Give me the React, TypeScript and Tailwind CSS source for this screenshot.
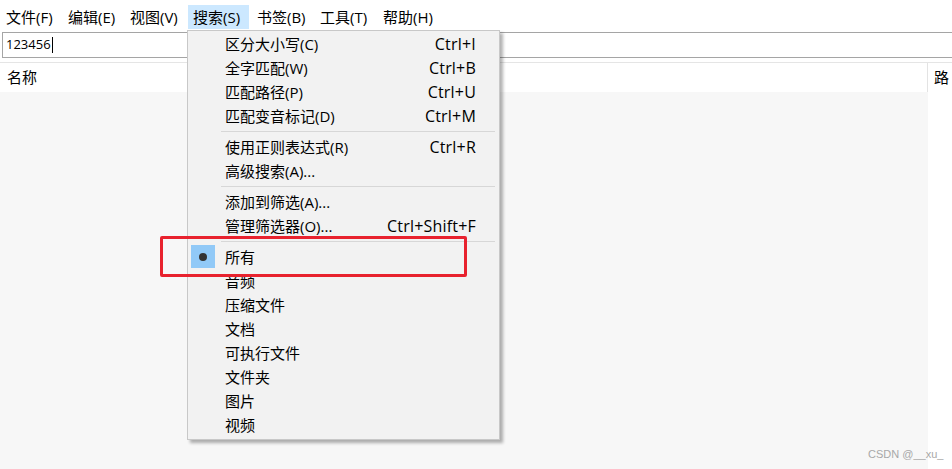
const menus = [
  { label: "文件(F)", cls: "ml-[1px]" },
  { label: "编辑(E)", cls: "ml-[1px]" },
  { label: "视图(V)", cls: "ml-[1px]" },
  { label: "搜索(S)", cls: "ml-[2px] bg-[#cce8ff] border-[#99d1ff]", active: true },
  { label: "书签(B)", cls: "ml-[3px]" },
  { label: "工具(T)", cls: "ml-[2px]" },
  { label: "帮助(H)", cls: "ml-[2px]" },
];

type Entry = { label: string; key?: string; radio?: boolean } | "sep";

const entries: Entry[] = [
  { label: "区分大小写(C)", key: "Ctrl+I" },
  { label: "全字匹配(W)", key: "Ctrl+B" },
  { label: "匹配路径(P)", key: "Ctrl+U" },
  { label: "匹配变音标记(D)", key: "Ctrl+M" },
  "sep",
  { label: "使用正则表达式(R)", key: "Ctrl+R" },
  { label: "高级搜索(A)..." },
  "sep",
  { label: "添加到筛选(A)..." },
  { label: "管理筛选器(O)...", key: "Ctrl+Shift+F" },
  "sep",
  { label: "所有", radio: true },
  { label: "音频" },
  { label: "压缩文件" },
  { label: "文档" },
  { label: "可执行文件" },
  { label: "文件夹" },
  { label: "图片" },
  { label: "视频" },
];

export default function App() {
  return (
    <div
      className="relative w-[952px] h-[469px] overflow-hidden bg-white text-black flex flex-col"
      style={{ fontFamily: '"Open Sans", "Noto Sans CJK SC", sans-serif' }}
    >
      {/* menu bar */}
      <div className="h-[30px] flex items-start pt-[5px] text-[15px]">
        {menus.map((m) => (
          <div
            key={m.label}
            className={`w-[61px] h-[24px] px-[4px] border border-transparent flex items-center whitespace-nowrap ${m.cls}`}
          >
            {m.label}
          </div>
        ))}
      </div>

      {/* search box */}
      <div className="mt-[2px] ml-[2px] h-[26px] border-y border-l border-[#a5a5a5] flex items-center pl-[3px] text-[13px]">
        <span>123456</span>
        <span className="w-px h-[16px] bg-black ml-[1px]" />
      </div>

      {/* results table */}
      <div className="mt-[4px] flex-1 flex flex-col border-t border-[#e5e5e5]">
        <div className="h-[29px] flex text-[15px]">
          <div className="w-[928px] border-r border-[#e3e3e3] pl-[7px] flex items-center">名称</div>
          <div className="w-[24px] pl-[6px] flex items-center whitespace-nowrap overflow-hidden">路</div>
        </div>
        <div className="flex-1 flex">
          <div className="w-[928px] bg-[#f7f7f7]" />
          <div className="flex-1 bg-white" />
        </div>
      </div>

      {/* dropdown menu */}
      <div className="absolute left-[187px] top-[30px] w-[313px] h-[410px] bg-[#f2f2f2] border border-[#c8c8c8] pt-[1px] pb-[2px] pl-px shadow-[3px_3px_3px_rgba(0,0,0,0.3)] text-[15px]">
        {entries.map((e, i) =>
          e === "sep" ? (
            <div key={i} className="h-[7px] flex items-center pl-[32px] pr-[4px]">
              <div className="h-px w-full bg-[#d7d7d7]" />
            </div>
          ) : (
            <div key={i} className="h-[24px] flex items-center relative">
              {e.radio && (
                <div className="absolute left-[2px] top-0 w-[24px] h-[23px] bg-[#91c9f7] flex items-center justify-center">
                  <div className="w-[8px] h-[8px] rounded-full bg-[#333333]" />
                </div>
              )}
              <span className="pl-[36px] flex-1 whitespace-nowrap">{e.label}</span>
              {e.key && (
                <span className="pr-[23px] whitespace-nowrap text-[16px] tracking-[0.2px]">{e.key}</span>
              )}
            </div>
          )
        )}
      </div>

      {/* highlight annotation */}
      <div className="absolute left-[160px] top-[236px] w-[307px] h-[41px] border-[3px] border-[#e8222e] rounded-[2px]" />

      <div
        className="absolute left-[868px] top-[446px] text-[11px] text-[#a8a8a8]"
        style={{ fontFamily: '"Liberation Sans", sans-serif' }}
      >
        CSDN @__xu_
      </div>
    </div>
  );
}
